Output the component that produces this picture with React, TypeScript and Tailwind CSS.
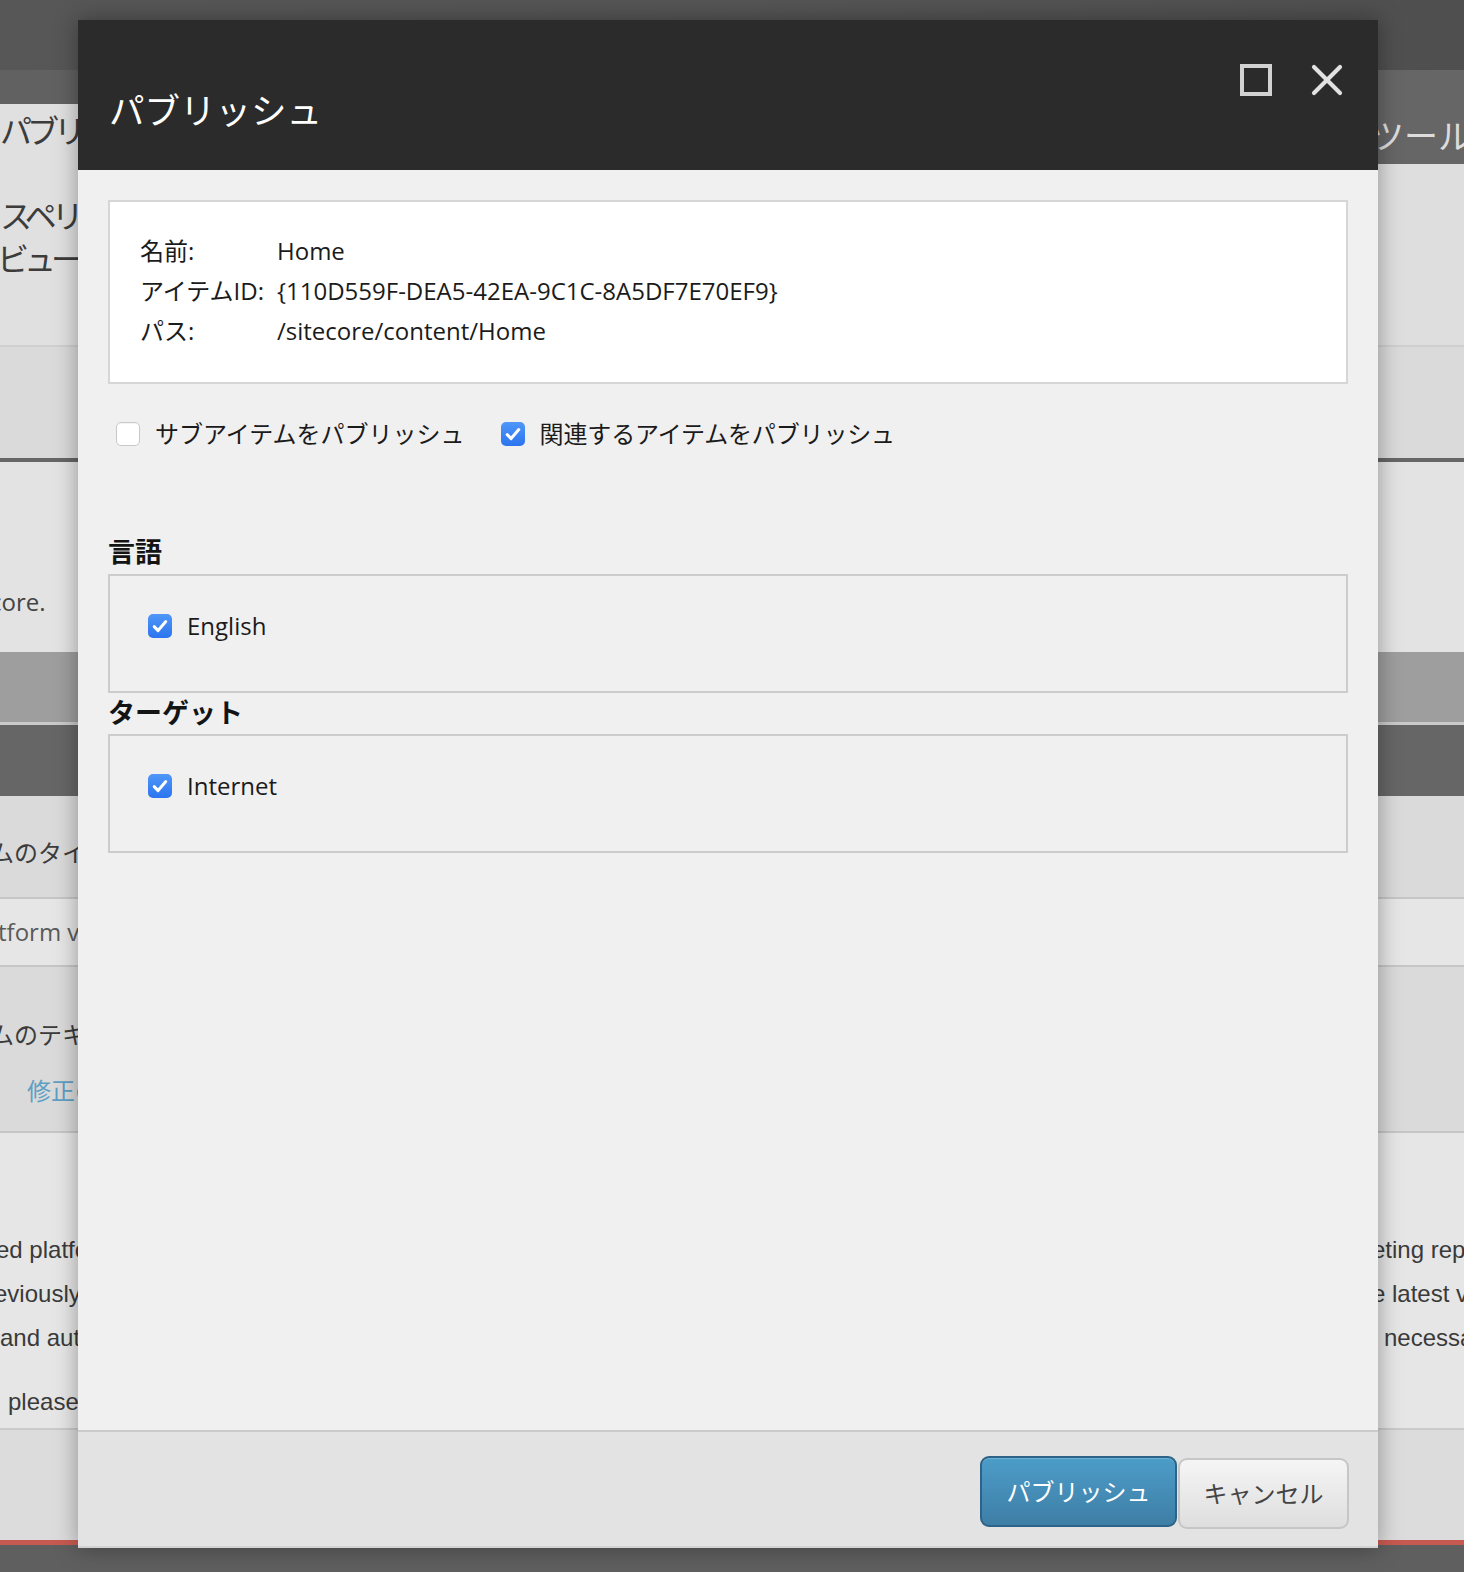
import React from "react";

const FONT = { fontFamily: '"Open Sans", "Noto Sans CJK JP", sans-serif' };
const JP = { fontFamily: '"Noto Sans CJK JP", sans-serif' };
const EN = { fontFamily: '"Liberation Sans", Arial, sans-serif' };

function Checked() {
  return (
    <svg width="24" height="24" viewBox="0 0 24 24" className="shrink-0">
      <defs>
        <linearGradient id="cbg" x1="0" y1="0" x2="0" y2="1">
          <stop offset="0" stopColor="#4f97f8" />
          <stop offset="1" stopColor="#2c74ee" />
        </linearGradient>
      </defs>
      <rect x="0" y="0" width="24" height="24" rx="5" fill="url(#cbg)" />
      <path d="M6.2 12.6 L10.1 16.6 L17.8 7.6" fill="none" stroke="#fff" strokeWidth="3" strokeLinecap="round" strokeLinejoin="round" />
    </svg>
  );
}

function Unchecked() {
  return <div className="w-[24px] h-[24px] shrink-0 rounded-[5px] bg-white border border-[#c9c9c9] shadow-[inset_0_1px_1px_rgba(0,0,0,0.05)]" />;
}

export default function App() {
  return (
    <div className="relative w-[1464px] h-[1572px] overflow-hidden bg-[#e6e6e6]" style={FONT}>
      {/* background page (dimmed) */}
      <div className="h-[70px] bg-gradient-to-r from-[#575757] via-[#555555] to-[#4f4f4f]" />
      <div className="h-[275px] flex">
        <div className="w-[78px] flex flex-col">
          <div className="h-[34px] bg-[#616161]" />
          <div className="flex-1 bg-[#e0e0e0] overflow-hidden whitespace-nowrap text-[32px] tracking-[-5px] text-[#3c3c3c]" style={JP}>
            <div className="mt-[4px] leading-[43px]">パブリッシュ</div>
            <div className="mt-[42px] leading-[43px]">スペリエンス</div>
            <div className="leading-[43px] ml-[-3px]">ビューー</div>
          </div>
        </div>
        <div className="flex-1 bg-[#e0e0e0]" />
        <div className="w-[86px] flex flex-col">
          <div className="h-[94px] bg-[#666666] overflow-hidden whitespace-nowrap text-[34px] text-[#dcdcdc]" style={JP}>
            <div className="mt-[43px] leading-[43px] ml-[-8px]">ツールバー</div>
          </div>
          <div className="flex-1 bg-[#dedede]" />
        </div>
      </div>
      <div className="h-[2px] bg-[#cfcfcf]" />
      <div className="h-[111px] bg-[#dadada]" />
      <div className="h-[4px] bg-[#666666]" />
      <div className="h-[190px] bg-[#e3e3e3] overflow-hidden whitespace-nowrap text-[24px] text-[#444]" style={FONT}>
        <div className="mt-[124px] leading-[32px] ml-[-10px]">core.</div>
      </div>
      <div className="h-[70px] bg-[#9e9e9e]" />
      <div className="h-[3px] bg-[#cacaca]" />
      <div className="h-[71px] bg-[#666666]" />
      <div className="h-[101px] bg-[#dadada] overflow-hidden whitespace-nowrap text-[24px] text-[#3c3c3c]" style={JP}>
        <div className="mt-[40px] leading-[32px] ml-[-10px]">ムのタイトル</div>
      </div>
      <div className="h-[2px] bg-[#c6c6c6]" />
      <div className="h-[66px] bg-[#e6e6e6] overflow-hidden whitespace-nowrap text-[24px] text-[#5a5a5a]" style={FONT}>
        <div className="mt-[17px] leading-[32px] ml-[-2px]">tform version</div>
      </div>
      <div className="h-[2px] bg-[#c6c6c6]" />
      <div className="h-[164px] bg-[#dadada] overflow-hidden whitespace-nowrap text-[24px]" style={JP}>
        <div className="mt-[51px] leading-[32px] ml-[-10px] text-[#3c3c3c]">ムのテキスト</div>
        <div className="mt-[24px] leading-[32px] ml-[27px] text-[#5f9fc4]">修正の</div>
      </div>
      <div className="h-[2px] bg-[#c6c6c6]" />
      <div className="h-[295px] bg-[#e6e6e6] flex text-[24px] text-[#3a3a3a]" style={EN}>
        <div className="w-[78px] overflow-hidden whitespace-nowrap">
          <div className="mt-[95px] leading-[44px] ml-[-4px]">ed platform</div>
          <div className="leading-[44px] ml-[-6px]">eviously</div>
          <div className="leading-[44px]">and auto</div>
          <div className="mt-[20px] leading-[44px] ml-[8px]">please</div>
        </div>
        <div className="flex-1" />
        <div className="w-[86px] overflow-hidden whitespace-nowrap">
          <div className="mt-[95px] leading-[44px] ml-[-6px]">eting report</div>
          <div className="leading-[44px] ml-[-6px]">e latest v</div>
          <div className="leading-[44px] ml-[6px]">necessary</div>
        </div>
      </div>
      <div className="h-[2px] bg-[#cacaca]" />
      <div className="h-[110px] bg-[#dcdcdc]" />
      <div className="h-[5px] bg-[#c65a50]" />
      <div className="h-[27px] bg-[#5f5f5f]" />

      {/* modal */}
      <div className="absolute left-[78px] top-[20px] w-[1300px] h-[1528px] flex flex-col bg-[#f0f0f0] shadow-[0_0_22px_rgba(0,0,0,0.35)]">
        <div className="h-[150px] shrink-0 bg-[#2b2b2b] flex items-start justify-between">
          <div className="pt-[69px] pl-[31px] text-[35.5px] leading-[42px] text-white" style={FONT}>パブリッシュ</div>
          <div className="flex items-center gap-[39px] pt-[44px] pr-[35px]">
            <svg width="32" height="32" viewBox="0 0 32 32">
              <rect x="2" y="2" width="28" height="28" fill="none" stroke="#d2d2d2" strokeWidth="4" />
            </svg>
            <svg width="32" height="32" viewBox="0 0 32 32">
              <path d="M3 3 L29 29 M29 3 L3 29" stroke="#e2e2e2" strokeWidth="4.2" strokeLinecap="round" />
            </svg>
          </div>
        </div>

        <div className="flex-1 px-[30px] pt-[30px] text-[#1b1b1b]">
          <div className="bg-white border-2 border-[#d6d6d6] pl-[30px] pt-[29px] pb-[30px] h-[184px]">
            <div className="grid grid-cols-[137px_1fr] text-[24px] leading-[40px]">
              <div>名前:</div>
              <div>Home</div>
              <div>アイテムID:</div>
              <div>{"{110D559F-DEA5-42EA-9C1C-8A5DF7E70EF9}"}</div>
              <div>パス:</div>
              <div>/sitecore/content/Home</div>
            </div>
          </div>

          <div className="mt-[38px] h-[24px] flex items-center text-[24px] leading-[24px]">
            <div className="ml-[8px]"><Unchecked /></div>
            <span className="ml-[15px]">サブアイテムをパブリッシュ</span>
            <div className="ml-[36px]"><Checked /></div>
            <span className="ml-[15px] tracking-[-0.15px]">関連するアイテムをパブリッシュ</span>
          </div>

          <div className="mt-[88px] mb-[4px] text-[27px] leading-[36px] font-bold text-[#141414]">言語</div>
          <div className="h-[119px] border-2 border-[#cccccc] pl-[38px] pt-[38px]">
            <div className="flex items-center h-[24px] text-[24px]">
              <Checked />
              <span className="ml-[15px]">English</span>
            </div>
          </div>

          <div className="mt-[2px] mb-[3px] text-[27px] leading-[36px] font-bold text-[#141414]">ターゲット</div>
          <div className="h-[119px] border-2 border-[#cccccc] pl-[38px] pt-[38px]">
            <div className="flex items-center h-[24px] text-[24px]">
              <Checked />
              <span className="ml-[15px]">Internet</span>
            </div>
          </div>
        </div>

        <div className="h-[118px] shrink-0 bg-[#e3e3e3] border-t-2 border-b-2 border-t-[#cbcbcb] border-b-[#d3d3d3] flex justify-end items-start pt-[24px] pr-[29px]">
          <button className="w-[197px] h-[71px] rounded-[9px] border-2 border-[#2d6388] bg-gradient-to-b from-[#4c9dc9] to-[#3e7ea6] text-white text-[24px] shadow-[inset_0_1px_0_rgba(255,255,255,0.2)]" style={FONT}>
            パブリッシュ
          </button>
          <button className="ml-[1px] mt-[2px] w-[171px] h-[71px] rounded-[9px] border-2 border-[#c6c6c6] bg-gradient-to-b from-[#f5f5f5] to-[#dedede] text-[#444] text-[24px]" style={FONT}>
            キャンセル
          </button>
        </div>
      </div>
    </div>
  );
}
